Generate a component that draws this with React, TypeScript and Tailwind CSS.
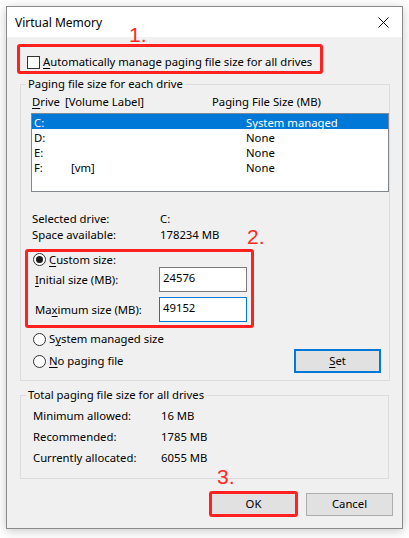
import React from 'react';

// Cuadro de diálogo "Virtual Memory" con marcas rojas de anotación
const font = "font-['Noto_Sans',_'Liberation_Sans',_sans-serif]";

function Radio({ checked }: { checked?: boolean }) {
  return (
    <span className="flex h-[13px] w-[13px] shrink-0 items-center justify-center rounded-full border border-[#333] bg-white">
      {checked && <span className="h-[7px] w-[7px] rounded-full bg-[#1a1a1a]" />}
    </span>
  );
}

function Mnemonic({ pre = '', k, post = '' }: { pre?: string; k: string; post?: string }) {
  return (
    <span>
      {pre}
      <span className="underline underline-offset-[2px]">{k}</span>
      {post}
    </span>
  );
}

interface Drive {
  letter: string;
  label: string;
  size: string;
  selected?: boolean;
}

const drives: Drive[] = [
  { letter: 'C:', label: '', size: 'System managed', selected: true },
  { letter: 'D:', label: '', size: 'None' },
  { letter: 'E:', label: '', size: 'None' },
  { letter: 'F:', label: '[vm]', size: 'None' },
];

const totals = [
  { label: 'Minimum allowed:', value: '16 MB' },
  { label: 'Recommended:', value: '1785 MB' },
  { label: 'Currently allocated:', value: '6055 MB' },
];

function Step({ n, className }: { n: string; className: string }) {
  return (
    <span
      className={`absolute font-['Liberation_Sans',_sans-serif] text-[21px] leading-[21px] text-[#ff2a1f] ${className}`}
    >
      {n}
    </span>
  );
}

export default function App() {
  return (
    <div
      className={`relative h-[538px] w-[409px] overflow-hidden whitespace-nowrap bg-white pl-[6px] pt-[6px] text-[11.3px] text-black ${font}`}
    >
      <div className="flex h-[523px] w-[397px] flex-col border border-[#8a8a8a] bg-[#f0f0f0] shadow-[0_2px_10px_rgba(0,0,0,0.22)]">
        {/* Title bar */}
        <div className="flex h-[30px] shrink-0 items-center justify-between bg-white pl-[8px] pr-[12px]">
          <span className="pt-[2px] text-[12px] leading-[16px]">Virtual Memory</span>
          <svg width="11" height="11" viewBox="0 0 11 11" className="mr-[1px]">
            <path d="M0.5 0.5 L10.5 10.5 M10.5 0.5 L0.5 10.5" stroke="#111" strokeWidth="1" fill="none" />
          </svg>
        </div>

        {/* Body */}
        <div className="flex flex-col">
          {/* Auto manage checkbox (annotated) */}
          <div className="ml-[10px] mt-[7px] flex h-[30px] w-[306px] items-center rounded-[3px] border-[3px] border-[#ff2020] pl-[7px] pt-[6px]">
            <span className="h-[13px] w-[13px] shrink-0 border border-[#333] bg-white" />
            <span className="ml-[3px] leading-[16px]">
              <Mnemonic k="A" post="utomatically manage paging file size for all drives" />
            </span>
          </div>

          {/* Paging file size for each drive */}
          <fieldset className="ml-[13px] mt-[2px] w-[369px] border border-[#dcdcdc] pb-[7px]">
            <legend className="ml-[5px] px-[2px] leading-[16px]">Paging file size for each drive</legend>
            <div className="mt-[2px] flex h-[16px] items-center pl-[11px] leading-[16px]">
              <span className="w-[33px]">
                <Mnemonic k="D" post="rive" />
              </span>
              <span className="w-[147px]">[Volume Label]</span>
              <span>Paging File Size (MB)</span>
            </div>
            <div className="ml-[10px] mt-[3px] h-[79px] w-[358px] border border-[#828790] bg-white">
              {drives.map((d) => (
                <div
                  key={d.letter}
                  className={`flex h-[15px] items-center pt-[1px] leading-[15px] ${
                    d.selected ? 'bg-[#0078d7] text-white' : ''
                  }`}
                >
                  <span className="w-[39px] pl-[2px]">{d.letter}</span>
                  <span className="w-[175px]">{d.label}</span>
                  <span>{d.size}</span>
                </div>
              ))}
            </div>

            <div className="mt-[19px] grid grid-cols-[128px_1fr] pl-[11px] leading-[16px]">
              <span>Selected drive:</span>
              <span>C:</span>
              <span>Space available:</span>
              <span>178234 MB</span>
            </div>

            {/* Custom size (annotated) */}
            <div className="ml-[4px] mt-[6px] flex h-[79px] w-[229px] flex-col rounded-[3px] border-[3px] border-[#ff2020] pb-[3px]">
              <div className="flex h-[15px] items-center pl-[5px] leading-[16px]">
                <Radio checked />
                <span className="ml-[3px]">
                  <Mnemonic k="C" post="ustom size:" />
                </span>
              </div>
              <div className="flex items-center pl-[7px]">
                <span className="w-[124px] leading-[16px]">
                  <Mnemonic k="I" post="nitial size (MB):" />
                </span>
                <div className="flex h-[25px] w-[88px] items-center border border-[#7a7a7a] bg-white pb-[2px] pl-[3px]">
                  24576
                </div>
              </div>
              <div className="mt-[5px] flex items-center pl-[7px]">
                <span className="w-[124px] leading-[16px]">
                  <Mnemonic pre="Ma" k="x" post="imum size (MB):" />
                </span>
                <div className="flex h-[25px] w-[88px] items-center border border-[#0078d7] bg-white pb-[2px] pl-[3px]">
                  49152
                </div>
              </div>
            </div>

            <div className="mt-[3px] flex items-end justify-between pl-[12px] pr-[8px]">
              <div className="flex flex-col gap-[6px] pb-[4px] leading-[16px]">
                <div className="flex h-[16px] items-center">
                  <Radio />
                  <span className="ml-[3px]">
                    <Mnemonic pre="S" k="y" post="stem managed size" />
                  </span>
                </div>
                <div className="flex h-[16px] items-center">
                  <Radio />
                  <span className="ml-[3px]">
                    <Mnemonic k="N" post="o paging file" />
                  </span>
                </div>
              </div>
              <button
                type="button"
                className="flex h-[24px] w-[87px] items-center justify-center border-2 border-[#0078d7] bg-[#e1e1e1] leading-[16px]"
              >
                <Mnemonic k="S" post="et" />
              </button>
            </div>
          </fieldset>

          {/* Totals */}
          <fieldset className="ml-[13px] mt-[6px] w-[369px] border border-[#dcdcdc] pb-[12px]">
            <legend className="ml-[5px] px-[2px] leading-[16px]">Total paging file size for all drives</legend>
            <div className="mt-[5px] flex flex-col gap-[5px] pl-[12px]">
              {totals.map((t) => (
                <div key={t.label} className="flex h-[16px] items-center leading-[16px]">
                  <span className="w-[128px]">{t.label}</span>
                  <span>{t.value}</span>
                </div>
              ))}
            </div>
          </fieldset>

          {/* Buttons */}
          <div className="mr-[9px] mt-[12px] flex items-center justify-end gap-[8px]">
            <button
              type="button"
              className="flex h-[26px] w-[89px] items-center justify-center rounded-[3px] border-[3px] border-[#ff2020] bg-[#e1e1e1] leading-[16px]"
            >
              OK
            </button>
            <button
              type="button"
              className="flex h-[23px] w-[87px] items-center justify-center border border-[#adadad] bg-[#e1e1e1] leading-[16px]"
            >
              Cancel
            </button>
          </div>
        </div>
      </div>

      <Step n="1." className="left-[129px] top-[24px]" />
      <Step n="2." className="left-[247px] top-[226px]" />
      <Step n="3." className="left-[217px] top-[466px]" />
    </div>
  );
}
